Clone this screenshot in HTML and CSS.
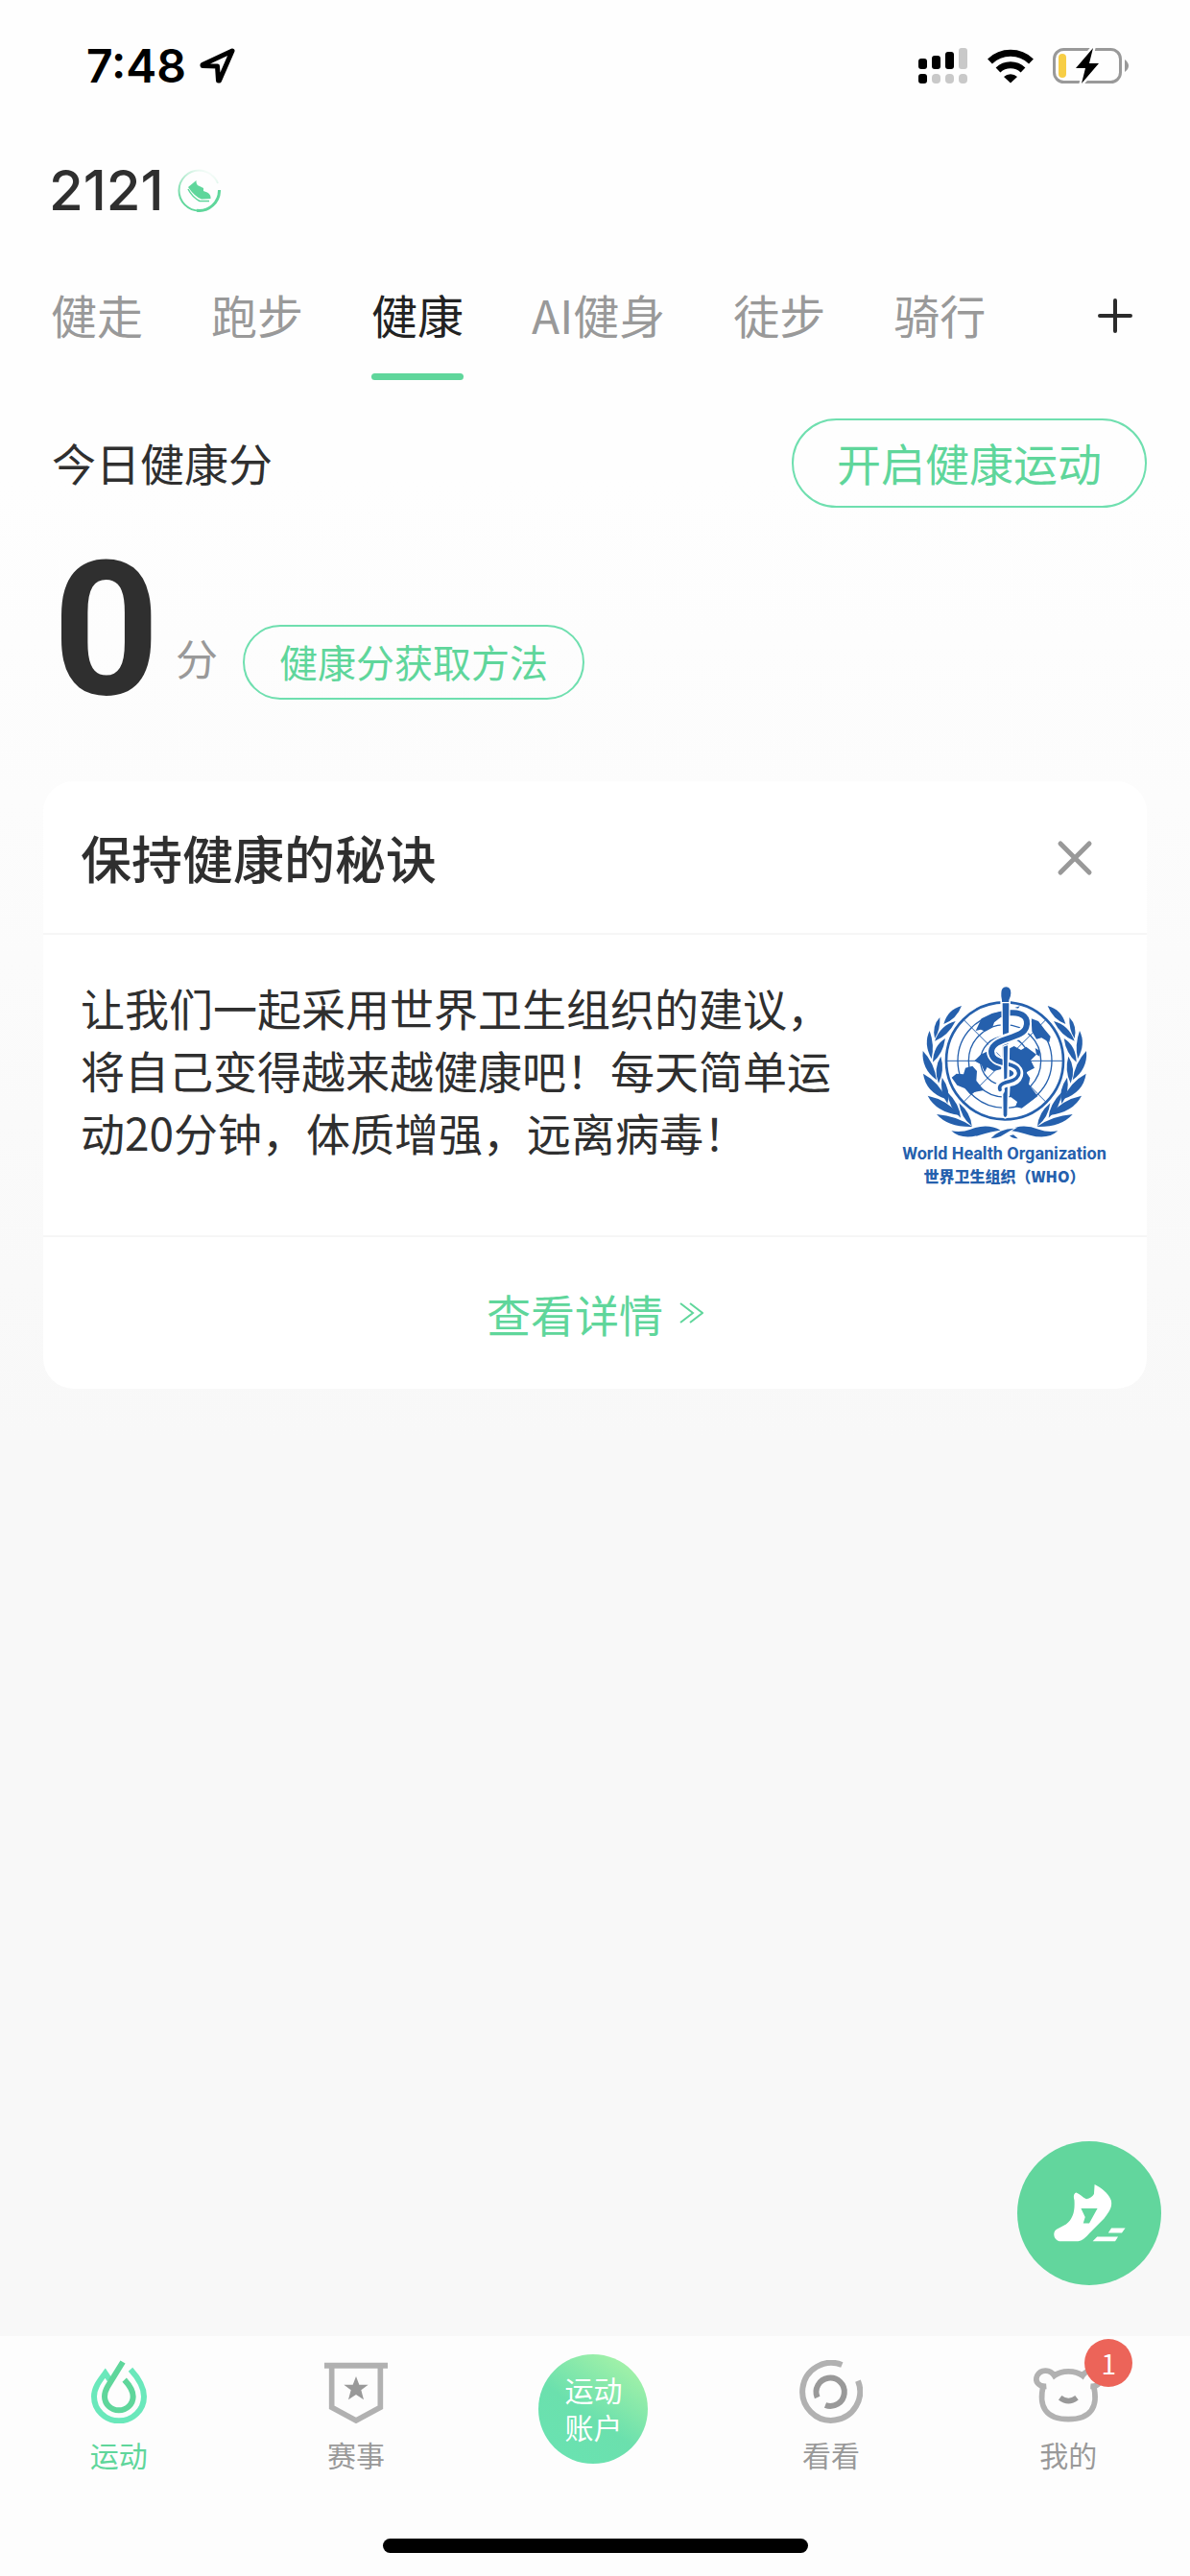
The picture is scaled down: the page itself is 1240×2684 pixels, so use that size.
FILE: index.html
```html
<!DOCTYPE html>
<html lang="zh-CN">
<head>
    <meta charset="UTF-8">
    <meta name="viewport" content="width=device-width, initial-scale=1.0">
    <title>健康</title>
    <link rel="stylesheet" href="styles.css">
</head>
<body>
    <div class="status-bar">
        <div class="status-left">
            <span class="time">7:48</span>
            <svg class="icon-location" viewBox="0 0 37 37" fill="none" stroke="#000" stroke-width="5" stroke-linejoin="round">
                <path d="M34 3 L3 17.500 V18.500 L18.500 19 L19.500 34 H20.500 Z"/>
            </svg>
        </div>
        <div class="status-right">
            <svg class="icon-signal" viewBox="0 0 52 37">
                <g fill="#000">
                    <rect x="0" y="11" width="9" height="11" rx="3"/>
                    <rect x="14" y="8" width="9" height="14" rx="3"/>
                    <rect x="28" y="4" width="9" height="18" rx="3"/>
                    <rect x="0" y="27" width="9" height="10" rx="3"/>
                </g>
                <g fill="#c9c9c9">
                    <rect x="42" y="0" width="9" height="22" rx="3"/>
                    <rect x="14" y="27" width="9" height="10" rx="4"/>
                    <rect x="28" y="27" width="9" height="10" rx="4"/>
                    <rect x="42" y="27" width="9" height="10" rx="4"/>
                </g>
            </svg>
            <svg class="icon-wifi" viewBox="0 0 48 37" fill="none" stroke="#000" stroke-width="7">
                <path d="M2.500 14 A31 31 0 0 1 45.500 14"/>
                <path d="M11 23 A19 19 0 0 1 37 23"/>
                <path d="M17 30 A10 10 0 0 1 31 30 L24 36.500 Z" fill="#000" stroke="none"/>
            </svg>
            <svg class="icon-battery" viewBox="0 0 79 39">
                <rect x="1.500" y="2.500" width="69" height="34" rx="10" fill="none" stroke="#999" stroke-width="3"/>
                <path d="M75 13 Q79 16 79 19.500 Q79 23 75 26 Z" fill="#999"/>
                <rect x="6" y="7" width="8" height="25" rx="4" fill="#f7ce46"/>
                <path d="M42 1 L24 22 H34 L30 38 L48 17 H38 Z" fill="#000" stroke="#fff" stroke-width="5" paint-order="stroke" stroke-linejoin="round"/>
            </svg>
        </div>
    </div>

    <header class="profile">
        <h1>2121</h1>
        <svg class="icon-shoe" viewBox="0 0 45 45">
            <defs>
                <linearGradient id="ring" x1="1" y1="0" x2="0.400" y2="1">
                    <stop offset="0.100" stop-color="#5fd69b" stop-opacity="0"/>
                    <stop offset="1" stop-color="#5fd69b"/>
                </linearGradient>
            </defs>
            <path d="M43.500 22.500 A21 21 0 1 1 22.500 1.500 A21 21 0 0 1 42 15" fill="none" stroke="url(#ring)" stroke-width="2"/>
            <path d="M43.500 22 A21 21 0 0 1 20 43.300" fill="none" stroke="#5fd69b" stroke-width="3"/>
            <path d="M11 19 L19.500 12 Q19 17 23 18 L27 20 L27 23 L31 24.500 Q35 26.500 34.500 31 L25 31.500 Q18 29 11 19Z" fill="#5fd69b"/>
            <path d="M11 21 Q15 29 23 33.500 H33" fill="none" stroke="#5fd69b" stroke-width="1.500"/>
        </svg>
    </header>

    <nav class="tabs">
        <a class="tab" href="#">健走</a>
        <a class="tab" href="#">跑步</a>
        <a class="tab active" href="#">健康</a>
        <a class="tab" href="#">AI健身</a>
        <a class="tab" href="#">徒步</a>
        <a class="tab" href="#">骑行</a>
        <button class="add-btn" type="button" aria-label="添加">
            <svg viewBox="0 0 36 36" stroke="#2b2b2b" stroke-width="4" stroke-linecap="round">
                <path d="M18 2 V34 M2 18 H34"/>
            </svg>
        </button>
    </nav>

    <main>
        <section class="today">
            <h2>今日健康分</h2>
            <button class="pill pill-large" type="button">开启健康运动</button>
        </section>

        <section class="score">
            <span class="score-value">0</span>
            <span class="score-unit">分</span>
            <button class="pill" type="button">健康分获取方法</button>
        </section>

        <section class="card">
            <div class="card-header">
                <h3>保持健康的秘诀</h3>
                <button class="close-btn" type="button" aria-label="关闭">
                    <svg viewBox="0 0 38 38" stroke="#999" stroke-width="5" stroke-linecap="round">
                        <path d="M4 4 L34 34 M34 4 L4 34"/>
                    </svg>
                </button>
            </div>
            <div class="card-body">
                <p>让我们一起采用世界卫生组织的建议，将自己变得越来越健康吧！每天简单运动20分钟，体质增强，远离病毒！</p>
                <div class="who">
                    <svg class="who-emblem" viewBox="111 85 660 483">
                        <defs>
                            <g id="laurel" fill="#2560ad">
                                <path d="M306 148 Q262 160 250 205 Q290 190 306 148Z"/>
                                <path d="M238 184 Q213 210 222 250 Q240 222 238 184Z"/>
                                <path d="M287 196 Q240 208 222 258 Q264 242 287 196Z"/>
                                <path d="M206 226 Q186 266 212 314 Q222 270 206 226Z"/>
                                <path d="M255 250 Q218 272 216 324 Q248 298 255 250Z"/>
                                <path d="M185 289 Q180 345 228 380 Q220 325 185 289Z"/>
                                <path d="M241 306 Q216 345 234 390 Q254 350 241 306Z"/>
                                <path d="M186 360 Q194 418 258 440 Q236 387 186 360Z"/>
                                <path d="M245 372 Q236 418 262 454 Q274 412 245 372Z"/>
                                <path d="M200 429 Q226 480 300 490 Q262 442 200 429Z"/>
                                <path d="M262 418 Q266 468 303 498 Q300 455 262 418Z"/>
                                <path d="M298 452 Q304 498 338 524 Q334 482 298 452Z"/>
                                <path d="M228 487 Q264 528 340 526 Q292 492 228 487Z"/>
                                <path d="M274 539 Q306 568 362 552 Q400 540 428 537 Q386 514 334 534 Q306 545 274 539Z"/>
                            </g>
                        </defs>
                        <use href="#laurel"/>
                        <use href="#laurel" transform="translate(881 0) scale(-1 1)"/>
                        <path d="M398 562 Q425 532 470 531 L428 556 Q414 562 398 562Z" fill="#2560ad" stroke="#fff" stroke-width="6" paint-order="stroke"/>
                        <path d="M456 554 L468 551 L482 563 Q466 564 456 554Z" fill="#2560ad"/>
                        <g fill="none" stroke="#2560ad" stroke-width="4">
                            <circle cx="441" cy="320" r="183" stroke-width="8"/>
                            <circle cx="441" cy="320" r="147"/>
                            <circle cx="441" cy="320" r="113"/>
                            <circle cx="441" cy="320" r="76"/>
                            <path stroke-width="3" d="M258 320 H624 M311 190 L571 450 M571 190 L311 450"/>
                        </g>
                        <g fill="#2560ad">
                            <path d="M350 226 L368 188 L396 174 L430 166 L428 184 L408 200 L402 216 L380 228 L366 222Z"/>
                            <path d="M346 320 L366 300 L388 290 L410 304 L436 330 L430 346 L406 352 L386 340 L378 356 L368 332Z"/>
                            <path d="M275 372 L290 360 L312 362 L318 342 L340 336 L354 352 L352 382 L376 412 L346 418 L334 426 L316 406 L292 396Z"/>
                            <path d="M446 286 L470 274 L492 286 L508 276 L526 290 L540 300 L522 318 L534 342 L508 356 L520 374 L516 394 L544 430 L518 450 L494 468 L474 464 L480 448 L456 430 L458 396 L450 370Z"/>
                            <path d="M524 188 L546 196 L566 222 L584 244 L580 262 L556 248 L540 252 L526 228Z"/>
                            <path d="M536 280 L550 288 L550 306 L540 300Z"/>
                            <path d="M472 154 L488 149 L482 158Z"/>
                        </g>
                        <!-- staff and serpent -->
                        <path d="M430 108 Q430 90 445 89 Q460 90 460 108 Q460 118 454 130 L448 490 Q442 502 437 490 L432 130 Q429 118 430 108Z" fill="#2560ad" stroke="#fff" stroke-width="10" paint-order="stroke"/>
                        <g fill="none" stroke-linecap="round">
                            <path d="M456 170 C500 166 516 188 508 214 C498 254 404 244 399 290 C399 322 440 324 466 336 C496 350 486 382 452 386 C428 390 422 400 426 412" stroke="#fff" stroke-width="30"/>
                            <path d="M405 180 C424 176 436 172 456 170 C500 166 516 188 508 214 C498 254 404 244 399 290 C399 314 418 320 432 324" stroke="#2560ad" stroke-width="18"/>
                            <path d="M448 330 C500 340 492 376 456 384 C428 390 422 400 426 410" stroke="#2560ad" stroke-width="11"/>
                        </g>
                        <path d="M434 140 H454 L453 232 L435 238Z M437 276 L450 272 L448 374 L439 378Z" fill="#2560ad" stroke="#fff" stroke-width="8" paint-order="stroke"/>
                    </svg>
                    <div class="who-name">World Health Organization</div>
                    <div class="who-name-cn">世界卫生组织（WHO）</div>
                </div>
            </div>
            <a class="card-more" href="#">
                查看详情
                <svg viewBox="0 0 25 22" fill="none" stroke="#5fd69b" stroke-width="2">
                    <path d="M1 1 L14 11 L1 21 M11 1 L24 11 L11 21"/>
                </svg>
            </a>
        </section>
    </main>

    <button class="fab" type="button" aria-label="开始运动">
        <svg viewBox="0 0 225 182" fill="#fff">
            <path d="M128 0 C150 12 170 25 180 50 C186 75 170 90 158 108 L112 154 Q92 178 76 180 H22 C0 180 -8 152 8 142 L38 126 C60 108 66 85 64 50 C60 38 62 28 70 26 C82 30 90 42 102 46 Q120 42 126 30Z"/>
            <path d="M85 76 H137 L111 123 H92 L98 103Z" fill="#62d69d"/>
            <path d="M181 138 H225 L214 153 H171Z M136 165 H202 L193 180 H122Z"/>
        </svg>
    </button>

    <footer class="bottom">
        <nav class="bottom-nav">
            <a class="nav-item active" href="#">
                <svg viewBox="273 118 198 198" fill="none" stroke-width="18">
                    <path stroke="#6ae8bb" d="M343 180 L329 159 C310 184 294 205 294 232 A78 76 0 0 0 450 232 C450 202 430 171 408 147"/>
                    <path stroke="#5fd69b" d="M384 124 L337 200 C329 214 327 222 327 232 A44.500 43 0 0 0 416 232 C416 212 404 196 389 180"/>
                </svg>
                <span>运动</span>
            </a>
            <a class="nav-item" href="#">
                <svg viewBox="1018 119 198 198">
                    <path d="M1018 136 H1216" stroke="#b1b1b1" stroke-width="18"/>
                    <path d="M1041 136 V267 L1117 308 L1193 267 V136" fill="none" stroke="#b1b1b1" stroke-width="17"/>
                    <path d="M1117 170 L1127 196 L1155 196 L1133 213 L1141 243 L1117 227 L1093 243 L1101 213 L1079 196 L1107 196Z" fill="#999"/>
                </svg>
                <span>赛事</span>
            </a>
            <a class="nav-account" href="#">
                <span>运动</span>
                <span>账户</span>
            </a>
            <a class="nav-item" href="#">
                <svg viewBox="101 118 198 198" fill="none" stroke-width="18">
                    <path stroke="#b1b1b1" d="M234 133 A90 90 0 1 0 284 183"/>
                    <path stroke="#999" d="M157 235 A44 44 0 1 1 182 259"/>
                </svg>
                <span>看看</span>
            </a>
            <a class="nav-item" href="#">
                <svg viewBox="846 118 198 198" fill="none" stroke-width="17" overflow="visible">
                    <path stroke="#b1b1b1" d="M877 200 C852 202 840 184 848 167 C858 148 888 144 902 167 C925 149 967 149 990 167 C1004 144 1034 148 1044 167 C1052 184 1040 202 1015 200"/>
                    <path stroke="#b1b1b1" d="M868 196 C850 266 878 303 946 303 C1014 303 1042 266 1024 196"/>
                    <path stroke="#999" d="M920 236 Q946 256 972 236"/>
                </svg>
                <span>我的</span>
                <span class="badge">1</span>
            </a>
        </nav>
        <div class="home-indicator"></div>
    </footer>
</body>
</html>
```

FILE: styles.css
```css
* {
    margin: 0;
    padding: 0;
    box-sizing: border-box;
}

body {
    font-family: 'Noto Sans CJK SC', 'Liberation Sans', sans-serif;
    color: #2f2f2f;
    background: linear-gradient(180deg, #fefefe 0, #fefefe 500px, #f8f8f8 1500px, #f8f8f8 100%);
    min-height: 100vh;
    display: flex;
    flex-direction: column;
}

a {
    color: inherit;
    text-decoration: none;
}

button {
    font-family: inherit;
    background: none;
    border: none;
    cursor: pointer;
}

svg {
    display: block;
}

/* Status bar */
.status-bar {
    display: flex;
    align-items: center;
    justify-content: space-between;
    height: 136px;
    padding: 0 64px 0 90px;
}

.status-left {
    display: flex;
    align-items: center;
    gap: 14px;
}

.status-right {
    display: flex;
    align-items: center;
    gap: 20px;
}

.time {
    font-family: Inter, sans-serif;
    font-size: 48px;
    font-weight: 600;
    color: #000;
}

.icon-location {
    width: 37px;
    height: 37px;
}

.icon-signal {
    width: 52px;
    height: 37px;
}

.icon-wifi {
    width: 48px;
    height: 37px;
}

.icon-battery {
    width: 79px;
    height: 39px;
}

/* Profile */
.profile {
    display: flex;
    align-items: center;
    gap: 14px;
    height: 124px;
    padding: 0 51px;
}

.profile h1 {
    font-family: Inter, sans-serif;
    font-size: 58px;
    font-weight: 500;
}

.icon-shoe {
    width: 45px;
    height: 45px;
}

/* Tabs */
.tabs {
    display: flex;
    align-items: flex-start;
    gap: 71px;
    padding: 32px 60px 0 53px;
}

.tab {
    padding-bottom: 34px;
    font-size: 48px;
    line-height: 70px;
    color: #999;
    white-space: nowrap;
}

.tab.active {
    position: relative;
    color: #222;
}

.tab.active::after {
    content: '';
    position: absolute;
    left: 0;
    right: 0;
    bottom: 0;
    height: 7px;
    border-radius: 4px;
    background: #5fd69b;
}

.add-btn {
    display: flex;
    align-items: center;
    height: 74px;
    margin-left: auto;
}

.add-btn svg {
    width: 36px;
    height: 36px;
}

/* Today */
main {
    flex: 1;
    padding: 40px 45px 0;
}

.today {
    display: flex;
    align-items: center;
    justify-content: space-between;
    padding-left: 9px;
}

.today h2 {
    padding-bottom: 4px;
    font-size: 46px;
    font-weight: 400;
}

.pill {
    height: 78px;
    padding: 0 36px 2px;
    border: 2px solid #6fdfaf;
    border-radius: 50px;
    font-size: 40px;
    line-height: 70px;
    color: #5fd69b;
}

.pill-large {
    height: 93px;
    padding: 0 45px 4px;
    font-size: 46px;
}

/* Score */
.score {
    display: flex;
    align-items: flex-end;
    height: 145px;
    margin-top: 55px;
    padding-left: 10px;
}

.score-value {
    width: 110px;
    font-family: Roboto, sans-serif;
    font-size: 194px;
    font-weight: 700;
    line-height: 145px;
}

.score-unit {
    margin: 0 26px 0 18px;
    font-size: 44px;
    line-height: 88px;
    color: #999;
}

/* Card */
.card {
    margin-top: 85px;
    border-radius: 32px;
    background: #fff;
}

.card-header {
    display: flex;
    align-items: center;
    justify-content: space-between;
    height: 160px;
    padding: 0 56px 0 39px;
    border-bottom: 2px solid #f6f6f6;
}

.card-header h3 {
    font-size: 53px;
    font-weight: 500;
}

.close-btn {
    padding-top: 2px;
}

.close-btn svg {
    width: 38px;
    height: 38px;
}

.card-body {
    display: flex;
    justify-content: space-between;
    gap: 50px;
    padding: 43px 36px 53px 39px;
    border-bottom: 2px solid #f6f6f6;
}

.card-body p {
    flex: 1;
    font-size: 46px;
    line-height: 65px;
}

.who {
    display: flex;
    flex-direction: column;
    align-items: center;
    width: 225px;
    padding-top: 10px;
    color: #2560ad;
    white-space: nowrap;
}

.who-emblem {
    width: 220px;
    height: 161px;
}

.who-name {
    font-family: Roboto, sans-serif;
    font-size: 18px;
    font-weight: 700;
    line-height: 28px;
}

.who-name-cn {
    font-size: 16px;
    font-weight: 900;
    line-height: 18px;
}

.card-more {
    display: flex;
    align-items: center;
    justify-content: center;
    gap: 17px;
    height: 158px;
    font-size: 46px;
    color: #5fd69b;
}

.card-more svg {
    width: 25px;
    height: 22px;
}

/* Floating button */
.fab {
    position: fixed;
    right: 30px;
    bottom: 303px;
    display: flex;
    align-items: center;
    justify-content: center;
    width: 150px;
    height: 150px;
    border-radius: 50%;
    background: #62d69d;
}

.fab svg {
    width: 75px;
    height: 60px;
}

/* Bottom navigation */
.bottom {
    height: 250px;
    background: #fdfdfd;
}

.bottom-nav {
    display: grid;
    grid-template-columns: repeat(5, 1fr);
    justify-items: center;
    height: 211px;
    padding: 19px 3px 0 0;
}

.nav-item {
    position: relative;
    display: flex;
    flex-direction: column;
    align-items: center;
    gap: 10px;
    padding-top: 6px;
    font-size: 30px;
    line-height: 44px;
    color: #999;
}

.nav-item svg {
    width: 66px;
    height: 66px;
}

.nav-item.active {
    color: #5fd69b;
}

.nav-account {
    display: flex;
    flex-direction: column;
    align-items: center;
    justify-content: center;
    width: 114px;
    height: 114px;
    padding-bottom: 2px;
    border-radius: 50%;
    background: linear-gradient(215deg, #a5f2a8 10%, #6be0ad 55%, #69e3b2 100%);
    font-size: 30px;
    line-height: 39px;
    color: #fff;
}

.badge {
    position: absolute;
    left: 50px;
    top: -16px;
    width: 50px;
    height: 50px;
    border-radius: 50%;
    background: #ec6459;
    font-size: 28px;
    line-height: 50px;
    text-align: center;
    color: #fff;
}

.home-indicator {
    width: 443px;
    height: 15px;
    margin: 0 auto;
    border-radius: 8px;
    background: #000;
}
```
